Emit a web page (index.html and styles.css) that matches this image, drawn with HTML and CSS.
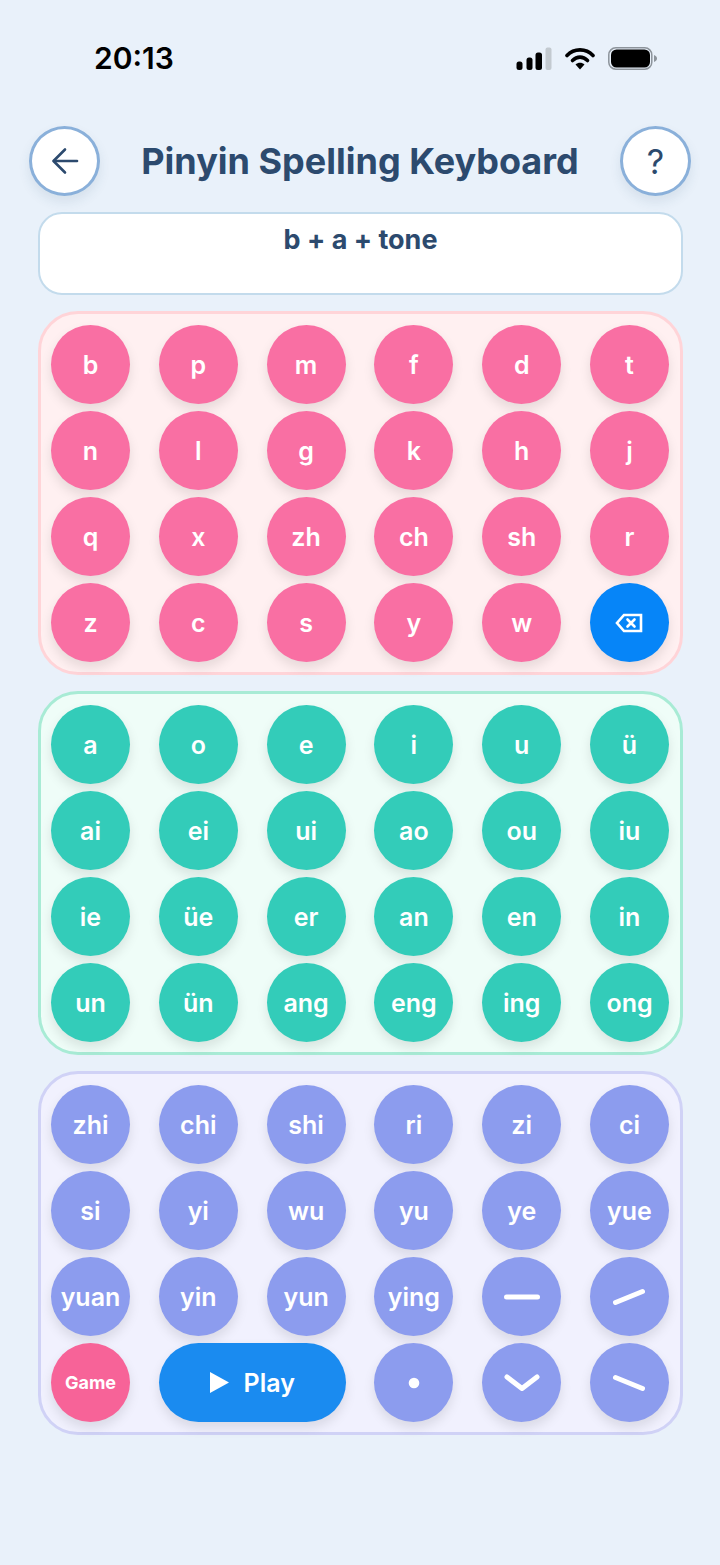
FILE: index.html
```html
<!DOCTYPE html>
<html lang="en">
<head>
    <meta charset="UTF-8">
    <meta name="viewport" content="width=device-width, initial-scale=1.0">
    <title>Pinyin Spelling Keyboard</title>
    <link rel="stylesheet" href="styles.css">
</head>
<body>
    <div class="status-bar">
        <span class="time">20:13</span>
        <div class="status-icons">
            <svg width="36" height="23" viewBox="0 0 36 23">
                <rect x="0.500" y="14.500" width="6" height="8.500" rx="2.500" fill="#000"/>
                <rect x="10.500" y="10.500" width="6" height="12.500" rx="2.500" fill="#000"/>
                <rect x="19.500" y="5.500" width="6.500" height="17.500" rx="2.500" fill="#000"/>
                <rect x="29.500" y="0.500" width="6" height="22.500" rx="2" fill="#c3cad0"/>
            </svg>
            <svg width="30" height="23" viewBox="0 0 30 23">
                <path d="M2 8.500 C9 1 21 1 28 8.500" fill="none" stroke="#000" stroke-width="3.600" stroke-linecap="round"/>
                <path d="M7.500 13.500 C12 9 18 9 22.500 13.500" fill="none" stroke="#000" stroke-width="3.600" stroke-linecap="round"/>
                <path d="M10.500 17.500 C13 15.200 17 15.200 19.500 17.500 L15 22.500 Z" fill="#000"/>
            </svg>
            <svg width="49" height="23" viewBox="0 0 49 23">
                <rect x="0.800" y="0.800" width="43" height="21.400" rx="7" fill="none" stroke="#8d949b" stroke-width="1.500"/>
                <rect x="3" y="2.500" width="39" height="18" rx="5.500" fill="#000"/>
                <path d="M46 8 C48 8.800 49 10 49 11.500 C49 13 48 14.200 46 15 Z" fill="#8d949b"/>
            </svg>
        </div>
    </div>

    <div class="header">
        <button class="round-btn">
            <svg width="30" height="30" viewBox="0 0 30 30" fill="none" stroke="#2c4a6e" stroke-width="2.600" stroke-linecap="round" stroke-linejoin="round">
                <path d="M27 15 H4"/>
                <path d="M15 3.500 L3.500 15 L15 26.500"/>
            </svg>
        </button>
        <h1 class="title">Pinyin Spelling Keyboard</h1>
        <button class="round-btn help">?</button>
    </div>

    <div class="display">b + a + tone</div>

    <div class="panel pink-panel">
        <button class="key pink">b</button>
        <button class="key pink">p</button>
        <button class="key pink">m</button>
        <button class="key pink">f</button>
        <button class="key pink">d</button>
        <button class="key pink">t</button>
        <button class="key pink">n</button>
        <button class="key pink">l</button>
        <button class="key pink">g</button>
        <button class="key pink">k</button>
        <button class="key pink">h</button>
        <button class="key pink">j</button>
        <button class="key pink">q</button>
        <button class="key pink">x</button>
        <button class="key pink">zh</button>
        <button class="key pink">ch</button>
        <button class="key pink">sh</button>
        <button class="key pink">r</button>
        <button class="key pink">z</button>
        <button class="key pink">c</button>
        <button class="key pink">s</button>
        <button class="key pink">y</button>
        <button class="key pink">w</button>
        <button class="key blue">
            <svg width="28" height="20" viewBox="0 0 28 20" fill="none" stroke="#fff" stroke-width="2.600" stroke-linejoin="miter" stroke-linecap="round">
                <path d="M9 2 H26 V18 H9 L2 10 Z"/>
                <path d="M12.500 6.500 L19.500 13.500 M19.500 6.500 L12.500 13.500"/>
            </svg>
        </button>
    </div>

    <div class="panel green-panel">
        <button class="key green">a</button>
        <button class="key green">o</button>
        <button class="key green">e</button>
        <button class="key green">i</button>
        <button class="key green">u</button>
        <button class="key green">ü</button>
        <button class="key green">ai</button>
        <button class="key green">ei</button>
        <button class="key green">ui</button>
        <button class="key green">ao</button>
        <button class="key green">ou</button>
        <button class="key green">iu</button>
        <button class="key green">ie</button>
        <button class="key green">üe</button>
        <button class="key green">er</button>
        <button class="key green">an</button>
        <button class="key green">en</button>
        <button class="key green">in</button>
        <button class="key green">un</button>
        <button class="key green">ün</button>
        <button class="key green">ang</button>
        <button class="key green">eng</button>
        <button class="key green">ing</button>
        <button class="key green">ong</button>
    </div>

    <div class="panel purple-panel">
        <button class="key purple">zhi</button>
        <button class="key purple">chi</button>
        <button class="key purple">shi</button>
        <button class="key purple">ri</button>
        <button class="key purple">zi</button>
        <button class="key purple">ci</button>
        <button class="key purple">si</button>
        <button class="key purple">yi</button>
        <button class="key purple">wu</button>
        <button class="key purple">yu</button>
        <button class="key purple">ye</button>
        <button class="key purple">yue</button>
        <button class="key purple">yuan</button>
        <button class="key purple">yin</button>
        <button class="key purple">yun</button>
        <button class="key purple">ying</button>
        <button class="key purple">
            <svg class="tone" viewBox="0 0 40 40"><path d="M4.500 20 H35.500"/></svg>
        </button>
        <button class="key purple">
            <svg class="tone" viewBox="0 0 40 40"><path d="M6.500 25.500 L33.500 14.500"/></svg>
        </button>
        <button class="key game">Game</button>
        <button class="play">
            <svg width="19" height="21" viewBox="0 0 19 21"><path d="M0 0 L19 10.500 L0 21 Z" fill="#fff"/></svg>
            Play
        </button>
        <button class="key purple">
            <svg class="tone" viewBox="0 0 40 40"><circle cx="20" cy="20" r="5.300" class="dot"/></svg>
        </button>
        <button class="key purple">
            <svg class="tone" viewBox="0 0 40 40"><path d="M5 14 L20 25.500 L35 14"/></svg>
        </button>
        <button class="key purple">
            <svg class="tone" viewBox="0 0 40 40"><path d="M6.500 14.500 L33.500 25.500"/></svg>
        </button>
    </div>
</body>
</html>
```

FILE: styles.css
```css
* {
    box-sizing: border-box;
}

body {
    background-color: #e9f1fa;
    margin: 0;
    height: 1565px;
    overflow: hidden;
    font-family: 'Inter', sans-serif;
}

button {
    font-family: inherit;
    border: none;
    padding: 0;
}

.status-bar {
    display: flex;
    justify-content: space-between;
    align-items: center;
    height: 36px;
    margin-top: 40px;
    padding: 0 63px 0 94px;
}

.time {
    font-size: 30px;
    font-weight: 600;
    color: #000;
}

.status-icons {
    display: flex;
    align-items: center;
    gap: 13px;
}

.header {
    display: flex;
    justify-content: space-between;
    align-items: center;
    margin-top: 50px;
    padding: 0 29px;
}

.round-btn {
    display: flex;
    justify-content: center;
    align-items: center;
    width: 71px;
    height: 70px;
    background-color: #fff;
    border: 3px solid #8ab0da;
    border-radius: 50%;
    box-shadow: 0 6px 12px rgba(44, 74, 110, 0.1);
}

.help {
    font-size: 34px;
    font-weight: 400;
    color: #2c4a6e;
}

.title {
    margin: 0;
    font-size: 36px;
    font-weight: 700;
    color: #2c4a6e;
}

.display {
    height: 83px;
    margin: 16px 37px 16px 38px;
    padding-top: 9px;
    background-color: #fff;
    border: 2px solid #c3dbec;
    border-radius: 24px;
    text-align: center;
    font-size: 27px;
    font-weight: 700;
    color: #2c4a6e;
}

.panel {
    display: grid;
    grid-template-columns: repeat(6, 79px);
    grid-auto-rows: 79px;
    justify-content: space-between;
    row-gap: 7px;
    height: 364px;
    margin: 0 37px 16px 38px;
    padding: 11px 11px 11px 10px;
    border: 3px solid;
    border-radius: 40px;
}

.pink-panel {
    background-color: #fff0f1;
    border-color: #ffd4d8;
}

.green-panel {
    background-color: #effdf8;
    border-color: #a8ebd5;
}

.purple-panel {
    background-color: #f1f1fe;
    border-color: #d0d2f6;
}

.key {
    display: flex;
    justify-content: center;
    align-items: center;
    border-radius: 50%;
    font-size: 25px;
    font-weight: 600;
    color: #fff;
    box-shadow: 0 6px 12px rgba(0, 0, 0, 0.1);
}

.pink {
    background-color: #f96fa3;
}

.green {
    background-color: #33ccb9;
}

.purple {
    background-color: #8c9cee;
}

.blue {
    background-color: #0685f8;
}

.game {
    background-color: #f76398;
    font-size: 18px;
    font-weight: 700;
}

.play {
    grid-column: span 2;
    display: flex;
    justify-content: center;
    align-items: center;
    gap: 15px;
    background-color: #1a8bf0;
    border-radius: 40px;
    font-size: 25px;
    font-weight: 600;
    color: #fff;
    box-shadow: 0 6px 12px rgba(0, 0, 0, 0.1);
}

.tone {
    width: 40px;
    height: 40px;
    fill: none;
    stroke: #fff;
    stroke-width: 5;
    stroke-linecap: round;
    stroke-linejoin: round;
}

.tone .dot {
    fill: #fff;
    stroke: none;
}
```
